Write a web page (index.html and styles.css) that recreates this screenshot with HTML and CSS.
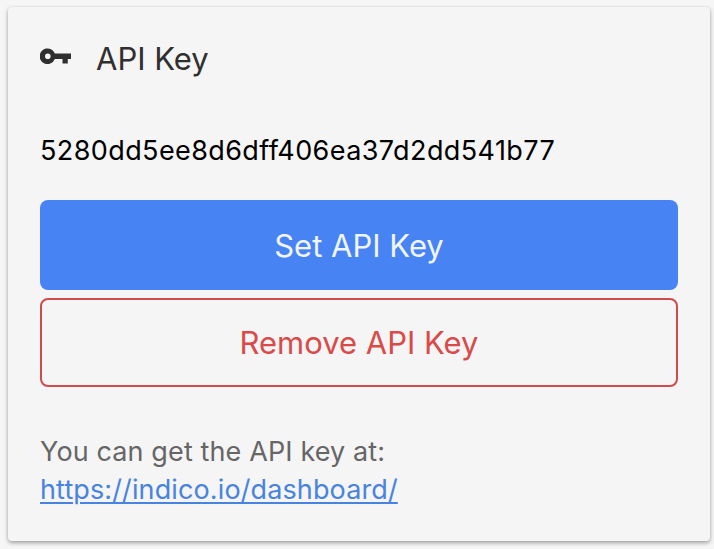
FILE: index.html
```html
<!DOCTYPE html>
<html lang="en">
<head>
<meta charset="utf-8">
<title>API Key</title>
<link rel="stylesheet" href="styles.css">
</head>
<body>
<main class="card">
  <header class="card-header">
    <svg class="key-icon" viewBox="0 0 32 17" aria-hidden="true"><path fill-rule="evenodd" d="M14.8 5.5A7.8 7.8 0 1 0 14.8 10.9H22.5V15.5H27.8V10.9H31V5.5ZM7.8 5.4a2.8 2.8 0 1 1 0 5.6a2.8 2.8 0 1 1 0-5.6Z"/></svg>
    <h1 class="title">API Key</h1>
  </header>
  <p class="key-value">5280dd5ee8d6dff406ea37d2dd541b77</p>
  <div class="actions">
    <button class="button button-primary">Set API Key</button>
    <button class="button button-danger">Remove API Key</button>
  </div>
  <p class="help">You can get the API key at:<br><a class="help-link" href="https://indico.io/dashboard/">https://indico.io/dashboard/</a></p>
</main>
</body>
</html>
```
FILE: styles.css
```css
* { box-sizing: border-box; }
body { margin: 0; background: #f6f6f6; font-family: Inter, "Liberation Sans", sans-serif; }
.card { margin: 7px 4px 8px 8px; height: 534px; padding: 32px; border-radius: 4px; background: #f5f5f5; box-shadow: 0 2px 4px rgba(0,0,0,.34), 0 0 2px rgba(0,0,0,.08); }
.card-header { display: flex; align-items: center; height: 40px; gap: 24px; }
.key-icon { width: 32px; height: 17px; fill: #2f2f2f; margin-top: -6px; }
.title { margin: -2px 0 0; font-size: 31px; font-weight: 400; color: #2f2f2f; }
.key-value { margin: 52px 0 0; height: 40px; line-height: 40px; font-size: 27px; letter-spacing: .4px; color: #000; white-space: nowrap; }
.actions { display: grid; gap: 8px; margin-top: 29px; width: 638px; }
.button { height: 90px; border: 0; border-radius: 8px; font: 400 31px Inter, "Liberation Sans", sans-serif; padding: 0; }
.button-primary { background: #4883f3; color: #f0f5fb; }
.button-danger { background: transparent; border: 2px solid #cf4b4c; color: #d94a49; height: 89px; }
.help { margin: 46px 0 0; font-size: 27px; line-height: 38px; letter-spacing: .12px; color: #666; }
.help-link { color: #4883e0; text-decoration-thickness: 2px; text-underline-offset: 3px; }
```
